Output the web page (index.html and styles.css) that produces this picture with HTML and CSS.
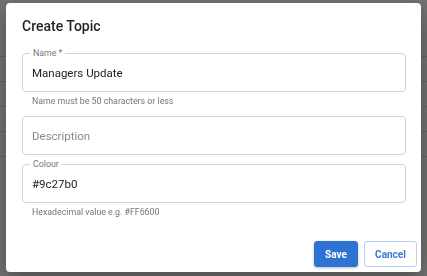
FILE: index.html
```html
<!DOCTYPE html>
<html lang="en">
<head>
  <meta charset="UTF-8" />
  <meta name="viewport" content="width=device-width, initial-scale=1.0"/>
  <title>Create Topic</title>
  <link rel="stylesheet" href="styles.css">
</head>
<body>
  <div class="page">
    <div class="row row-head"></div>
    <div class="row"></div>
    <div class="row"></div>
    <div class="row"></div>
    <div class="row"></div>
  </div>

  <div class="backdrop"></div>

  <div class="dialog">
    <h2 class="dialog-title">Create Topic</h2>

    <div class="dialog-content">
      <div class="field">
        <div class="input-box">
          <label class="input-label" for="topicName">Name *</label>
          <input id="topicName" class="input" type="text" value="Managers Update" />
        </div>
        <div class="helper">Name must be 50 characters or less</div>
      </div>

      <div class="field">
        <div class="input-box">
          <input id="topicDesc" class="input" type="text" placeholder="Description" />
        </div>
      </div>

      <div class="field">
        <div class="input-box">
          <label class="input-label" for="topicColour">Colour</label>
          <input id="topicColour" class="input" type="text" value="#9c27b0" />
        </div>
        <div class="helper">Hexadecimal value e.g. #FF6600</div>
      </div>
    </div>

    <div class="dialog-actions">
      <button class="btn btn-primary">Save</button>
      <button class="btn btn-outline">Cancel</button>
    </div>
  </div>
</body>
</html>
```

FILE: styles.css
```css
body {
  margin: 0;
  background-color: #fafafa;
  font-family: 'Roboto', 'Liberation Sans', sans-serif;
  overflow: hidden;
}
.page {
  padding-top: 9px;
}
.row {
  height: 24px;
  border-bottom: 1px solid #d6d6d6;
}
.row-head {
  height: 47px;
}
.backdrop {
  position: fixed;
  inset: 0;
  background-color: rgba(0, 0, 0, 0.55);
}
.dialog {
  position: fixed;
  left: 6px;
  top: 3px;
  width: 415px;
  height: 269px;
  box-sizing: border-box;
  background-color: #fff;
  border-radius: 4px;
  box-shadow: 0 8px 20px rgba(0, 0, 0, 0.3);
  display: flex;
  flex-direction: column;
  padding: 12px 15px 5px 16px;
}
.dialog-title {
  margin: 0 0 16px;
  font-size: 14px;
  line-height: 22px;
  font-weight: 500;
  color: rgba(0, 0, 0, 0.87);
}
.field {
  margin-bottom: 9px;
}
.input-box {
  position: relative;
  height: 39px;
  box-sizing: border-box;
  border: 1px solid #d3d3d3;
  border-radius: 4px;
}
.input-label {
  position: absolute;
  top: -6px;
  left: 7px;
  padding: 0 3px;
  background-color: #fff;
  font-size: 8.8px;
  line-height: 11px;
  color: #777;
}
.input {
  width: 100%;
  height: 100%;
  box-sizing: border-box;
  border: none;
  outline: none;
  background: transparent;
  padding: 0 9px;
  font-family: inherit;
  font-size: 11.5px;
  color: #222;
}
.input::placeholder {
  color: #8a8a8a;
}
.helper {
  margin: 3px 0 0 10px;
  font-size: 8.8px;
  line-height: 12px;
  color: #777;
}
.dialog-actions {
  margin-top: auto;
  margin-right: -11px;
  display: flex;
  justify-content: flex-end;
  gap: 6px;
}
.btn {
  height: 26px;
  box-sizing: border-box;
  border-radius: 3px;
  font-family: inherit;
  font-size: 10px;
  font-weight: 700;
  padding: 0 10px;
  cursor: pointer;
}
.btn-primary {
  width: 44px;
  background-color: #2e72d2;
  border: 1px solid #2e72d2;
  color: #fff;
  box-shadow: 0 1px 3px rgba(0, 0, 0, 0.25);
}
.btn-outline {
  width: 53px;
  background-color: #fff;
  border: 1px solid #b8cff0;
  color: #3a78d3;
}
```
